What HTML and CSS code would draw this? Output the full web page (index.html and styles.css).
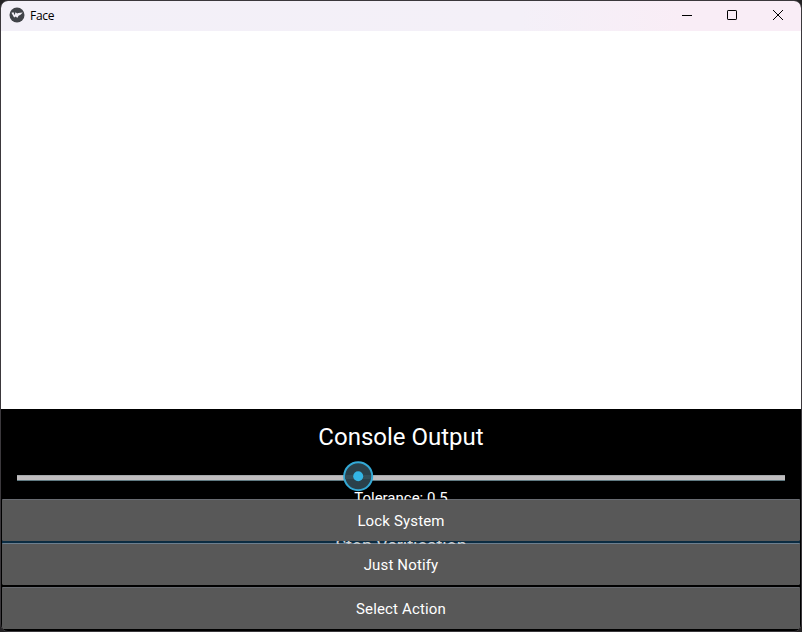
FILE: index.html
```html
<!DOCTYPE html>
<html lang="en">
<head>
<meta charset="utf-8">
<title>Face</title>
<link rel="stylesheet" href="styles.css">
</head>
<body>
<div class="window">
  <header class="titlebar">
    <svg class="logo" width="16" height="16" viewBox="0 0 16 16"><circle cx="8" cy="8" r="7.5" fill="#414449"/><path d="M2.4 5.8 4.5 5.2 5.6 8.2 6.5 5.2 8.2 6.6 9.2 5.9 13.8 5.4 11.5 7.7 9.6 8.7 8.2 11 6.9 9.6 5.1 10.5Z" fill="#f3f0f7"/></svg>
    <span class="title">Face</span>
    <div class="controls">
      <svg width="46" height="30" viewBox="0 0 46 30"><path d="M19 14.5h10" stroke="#000"/></svg>
      <svg width="46" height="30" viewBox="0 0 46 30"><rect x="18.5" y="9.5" width="9" height="9" rx="0.6" fill="none" stroke="#000"/></svg>
      <svg width="46" height="30" viewBox="0 0 46 30"><path d="M18 9l10 10M28 9l-10 10" stroke="#000"/></svg>
    </div>
  </header>
  <main class="view"></main>
  <section class="panel">
    <h1 class="heading">Console Output</h1>
    <div class="slider">
      <div class="track"></div>
      <svg class="knob" width="32" height="32" viewBox="0 0 32 32"><circle cx="16.2" cy="16.2" r="14" fill="#2b414b" stroke="#33a9d6" stroke-width="2"/><path d="M3 15h26v4H3z" fill="#344e59"/><circle cx="16.2" cy="16.2" r="5" fill="#33b5e5"/></svg>
    </div>
    <div class="tolerance">Tolerance: 0.5</div>
    <div class="verify">Stop Verification</div>
    <div class="dropdown">
      <button class="option">Lock System</button>
      <button class="option">Just Notify</button>
      <button class="option">Select Action</button>
    </div>
  </section>
</div>
</body>
</html>
```
FILE: styles.css
```css
* { box-sizing: border-box; }
body { margin: 0; background: #242224; font-family: Roboto, sans-serif; }
.window {
  width: 802px; height: 632px;
  display: flex; flex-direction: column;
  border: 1px solid #3b383c;
  border-radius: 8px;
  overflow: hidden;
  background: #000;
}
.titlebar {
  height: 30px; flex: none;
  display: flex; align-items: center;
  padding-left: 8px;
  background: linear-gradient(90deg, #f3f0f8 0%, #f4f0f8 65%, #f9edf6 85%, #f9edf6 100%);
}
.logo { margin-bottom: 2px; }
.title { margin-left: 5px; font: 12px/16px "Open Sans", sans-serif; letter-spacing: -0.25px; color: #000; }
.controls { display: flex; margin-left: auto; }
.view { height: 378px; flex: none; background: #fff; }
.panel { position: relative; flex: 1; color: #fff; text-align: center; }
.heading { margin: 0; height: 56px; font-size: 24px; font-weight: 400; line-height: 56px; }
.slider { position: relative; height: 24px; padding: 10px 16px 0; }
.track { height: 6px; background: #c0bdbf; border-top: 1px solid #a5a8ab; border-bottom: 1px solid #607a82; }
.knob { position: absolute; left: 341px; top: -5px; }
.tolerance { height: 18px; font-size: 15px; line-height: 18px; }
.verify {
  height: 30px; margin: 30px 1px 0;
  background: #0b2c42;
  color: rgba(255, 255, 255, 0.8);
  font-size: 18px; line-height: 18px;
  letter-spacing: -0.1px;
}
.dropdown {
  position: absolute; left: 1px; right: 1px; top: 90px;
  display: flex; flex-direction: column; gap: 2px;
}
.option {
  height: 42px; padding: 0;
  border: 0; border-top: 1px solid rgba(190, 195, 205, 0.55);
  border-radius: 1px;
  background: #585858;
  background-clip: padding-box;
  color: #fff;
  font: 15px/42px Roboto, sans-serif;
  letter-spacing: 0.15px;
}
```
